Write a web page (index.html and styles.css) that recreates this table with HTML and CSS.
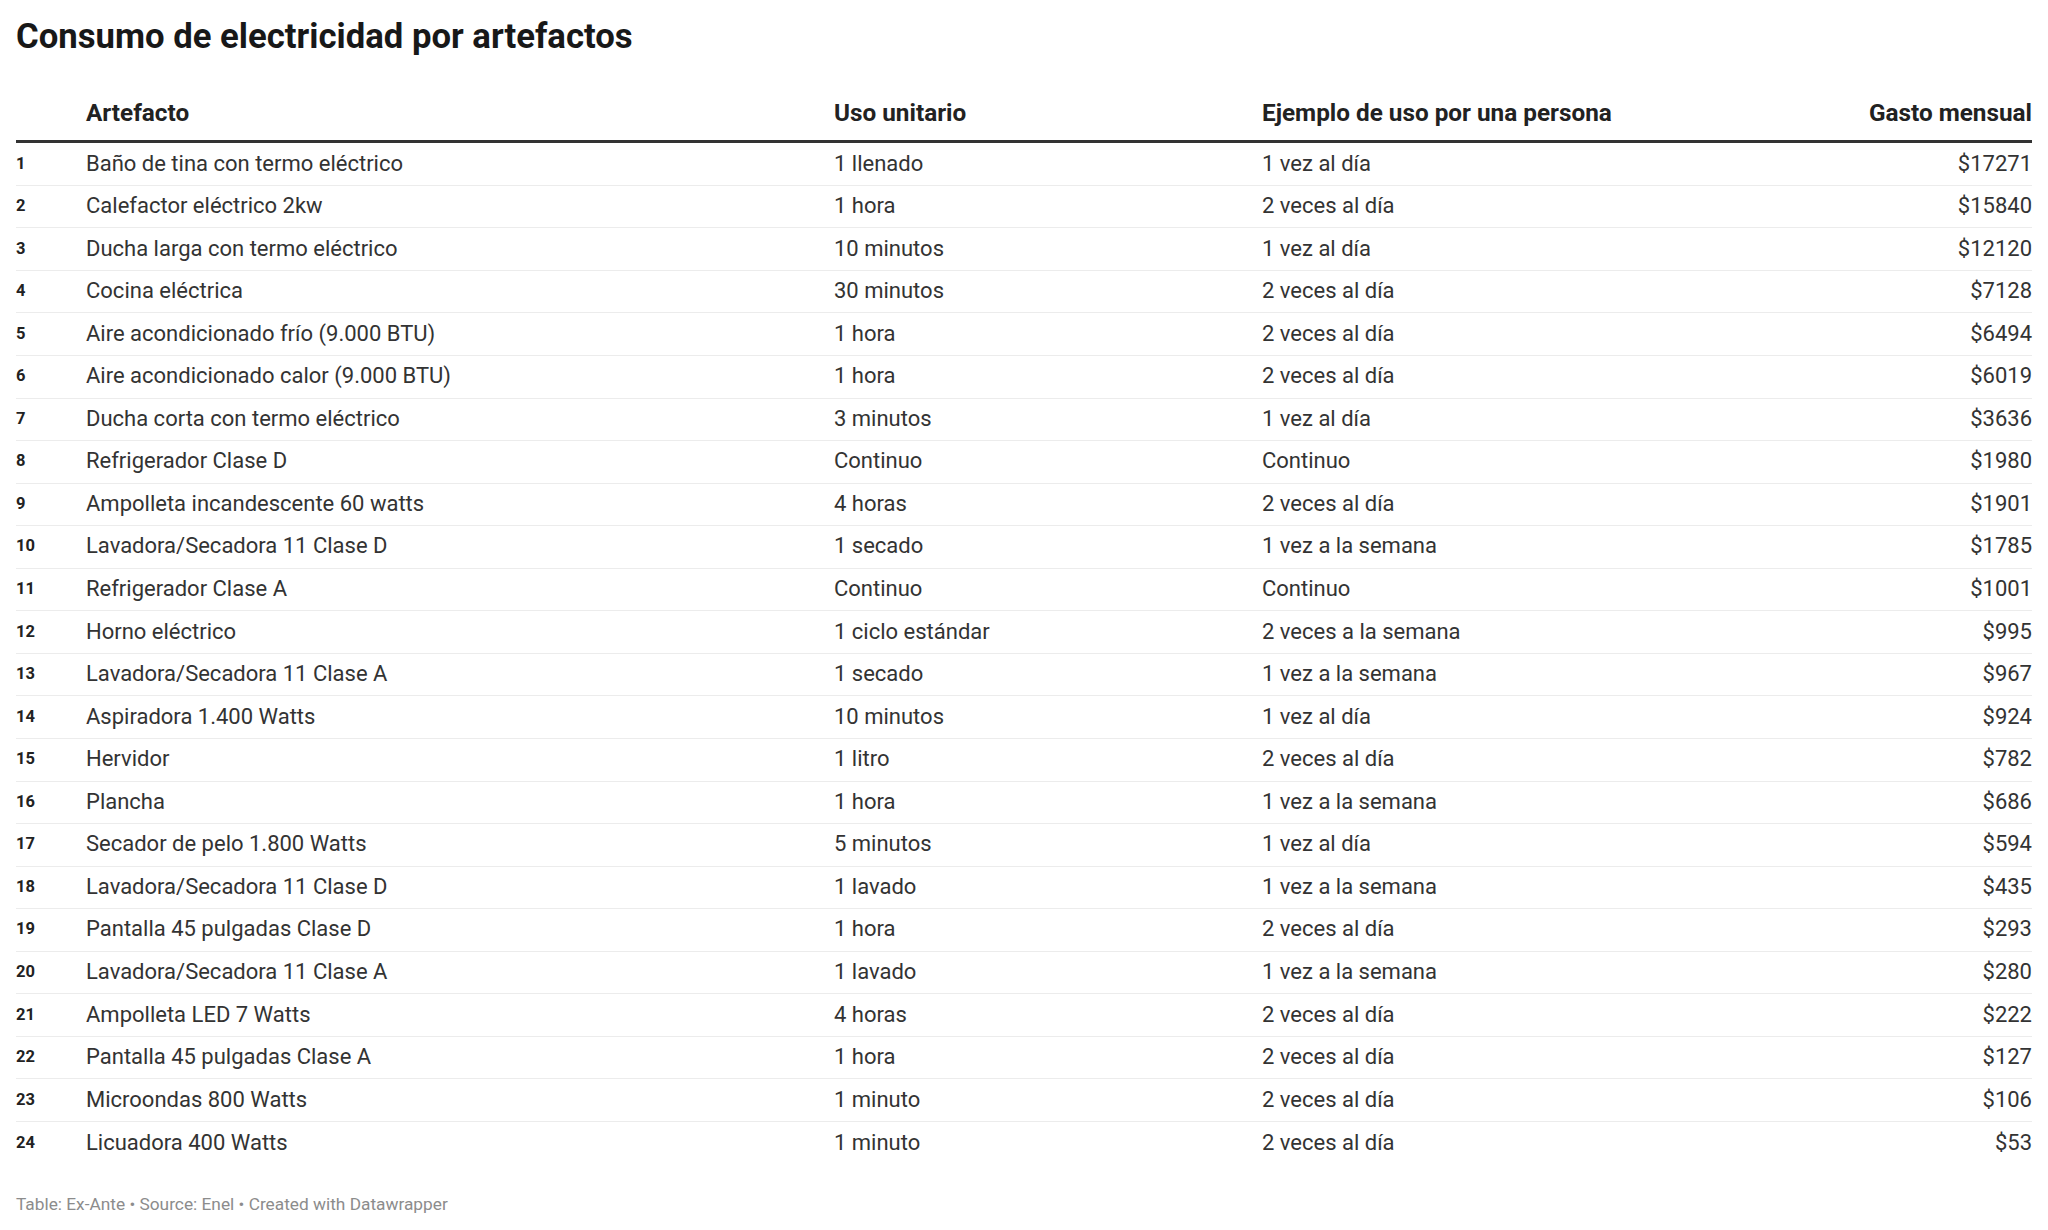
FILE: index.html
```html
<!DOCTYPE html>
<html lang="es">
<head>
<meta charset="utf-8">
<title>Consumo de electricidad por artefactos</title>
<link rel="stylesheet" href="styles.css">
</head>
<body>
<div class="chart">
  <h1 class="title">Consumo de electricidad por artefactos</h1>
  <div class="table">
    <div class="row head">
      <div class="num"></div>
      <div class="cell">Artefacto</div>
      <div class="cell">Uso unitario</div>
      <div class="cell">Ejemplo de uso por una persona</div>
      <div class="cell right">Gasto mensual</div>
    </div>
    <div class="row"><div class="num">1</div><div class="cell">Baño de tina con termo eléctrico</div><div class="cell">1 llenado</div><div class="cell">1 vez al día</div><div class="cell right">$17271</div></div>
    <div class="row"><div class="num">2</div><div class="cell">Calefactor eléctrico 2kw</div><div class="cell">1 hora</div><div class="cell">2 veces al día</div><div class="cell right">$15840</div></div>
    <div class="row"><div class="num">3</div><div class="cell">Ducha larga con termo eléctrico</div><div class="cell">10 minutos</div><div class="cell">1 vez al día</div><div class="cell right">$12120</div></div>
    <div class="row"><div class="num">4</div><div class="cell">Cocina eléctrica</div><div class="cell">30 minutos</div><div class="cell">2 veces al día</div><div class="cell right">$7128</div></div>
    <div class="row"><div class="num">5</div><div class="cell">Aire acondicionado frío (9.000 BTU)</div><div class="cell">1 hora</div><div class="cell">2 veces al día</div><div class="cell right">$6494</div></div>
    <div class="row"><div class="num">6</div><div class="cell">Aire acondicionado calor (9.000 BTU)</div><div class="cell">1 hora</div><div class="cell">2 veces al día</div><div class="cell right">$6019</div></div>
    <div class="row"><div class="num">7</div><div class="cell">Ducha corta con termo eléctrico</div><div class="cell">3 minutos</div><div class="cell">1 vez al día</div><div class="cell right">$3636</div></div>
    <div class="row"><div class="num">8</div><div class="cell">Refrigerador Clase D</div><div class="cell">Continuo</div><div class="cell">Continuo</div><div class="cell right">$1980</div></div>
    <div class="row"><div class="num">9</div><div class="cell">Ampolleta incandescente 60 watts</div><div class="cell">4 horas</div><div class="cell">2 veces al día</div><div class="cell right">$1901</div></div>
    <div class="row"><div class="num">10</div><div class="cell">Lavadora/Secadora 11 Clase D</div><div class="cell">1 secado</div><div class="cell">1 vez a la semana</div><div class="cell right">$1785</div></div>
    <div class="row"><div class="num">11</div><div class="cell">Refrigerador Clase A</div><div class="cell">Continuo</div><div class="cell">Continuo</div><div class="cell right">$1001</div></div>
    <div class="row"><div class="num">12</div><div class="cell">Horno eléctrico</div><div class="cell">1 ciclo estándar</div><div class="cell">2 veces a la semana</div><div class="cell right">$995</div></div>
    <div class="row"><div class="num">13</div><div class="cell">Lavadora/Secadora 11 Clase A</div><div class="cell">1 secado</div><div class="cell">1 vez a la semana</div><div class="cell right">$967</div></div>
    <div class="row"><div class="num">14</div><div class="cell">Aspiradora 1.400 Watts</div><div class="cell">10 minutos</div><div class="cell">1 vez al día</div><div class="cell right">$924</div></div>
    <div class="row"><div class="num">15</div><div class="cell">Hervidor</div><div class="cell">1 litro</div><div class="cell">2 veces al día</div><div class="cell right">$782</div></div>
    <div class="row"><div class="num">16</div><div class="cell">Plancha</div><div class="cell">1 hora</div><div class="cell">1 vez a la semana</div><div class="cell right">$686</div></div>
    <div class="row"><div class="num">17</div><div class="cell">Secador de pelo 1.800 Watts</div><div class="cell">5 minutos</div><div class="cell">1 vez al día</div><div class="cell right">$594</div></div>
    <div class="row"><div class="num">18</div><div class="cell">Lavadora/Secadora 11 Clase D</div><div class="cell">1 lavado</div><div class="cell">1 vez a la semana</div><div class="cell right">$435</div></div>
    <div class="row"><div class="num">19</div><div class="cell">Pantalla 45 pulgadas Clase D</div><div class="cell">1 hora</div><div class="cell">2 veces al día</div><div class="cell right">$293</div></div>
    <div class="row"><div class="num">20</div><div class="cell">Lavadora/Secadora 11 Clase A</div><div class="cell">1 lavado</div><div class="cell">1 vez a la semana</div><div class="cell right">$280</div></div>
    <div class="row"><div class="num">21</div><div class="cell">Ampolleta LED 7 Watts</div><div class="cell">4 horas</div><div class="cell">2 veces al día</div><div class="cell right">$222</div></div>
    <div class="row"><div class="num">22</div><div class="cell">Pantalla 45 pulgadas Clase A</div><div class="cell">1 hora</div><div class="cell">2 veces al día</div><div class="cell right">$127</div></div>
    <div class="row"><div class="num">23</div><div class="cell">Microondas 800 Watts</div><div class="cell">1 minuto</div><div class="cell">2 veces al día</div><div class="cell right">$106</div></div>
    <div class="row last"><div class="num">24</div><div class="cell">Licuadora 400 Watts</div><div class="cell">1 minuto</div><div class="cell">2 veces al día</div><div class="cell right">$53</div></div>
  </div>
  <p class="footer">Table: Ex-Ante • Source: Enel • Created with Datawrapper</p>
</div>
</body>
</html>
```
FILE: styles.css
```css
html, body {
  margin: 0;
  padding: 0;
  background: #fff;
}
body {
  font-family: Roboto, "Noto Sans", "Liberation Sans", sans-serif;
  color: #333;
}
.chart {
  padding: 16px 16px 0 16px;
}
.title {
  margin: 0;
  font-size: 34.7px;
  line-height: 40px;
  font-weight: 700;
  color: #181818;
}
.table {
  margin-top: 43px;
}
.row {
  display: grid;
  grid-template-columns: 70px 748px 428px 1fr 300px;
  align-items: center;
  box-sizing: border-box;
  height: 42.55px;
  padding: 0 0 1px 0;
  border-bottom: 1px solid #ececec;
  font-size: 22px;
  line-height: 26px;
}
.row.head {
  height: auto;
  align-items: end;
  padding: 0 0 13.3px 0;
  border-bottom: 3px solid #333;
  font-size: 24.3px;
  line-height: 28px;
  font-weight: 700;
  color: #222;
}
.row.last {
  border-bottom: none;
}
.num {
  font-size: 16.5px;
  line-height: 20px;
  font-weight: 700;
  color: #222;
}
.cell.right {
  text-align: right;
}
.footer {
  margin: 30px 0 0 0;
  font-size: 17.3px;
  line-height: 1.2;
  color: #8c8c8c;
}
```
